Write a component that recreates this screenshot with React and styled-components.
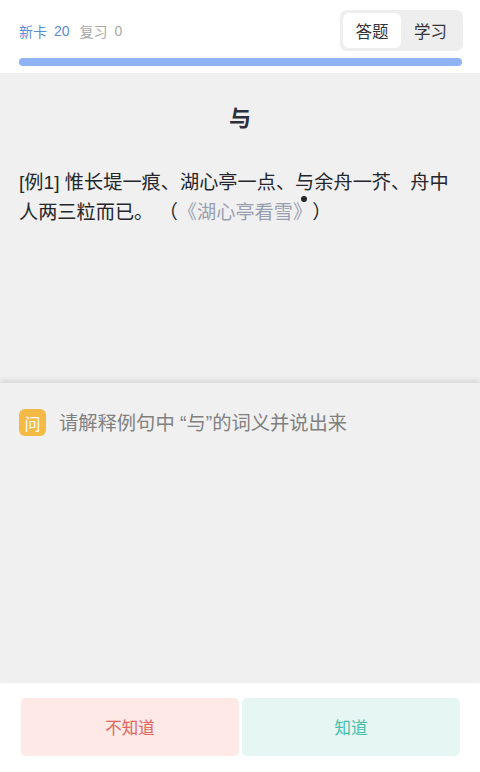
import React from 'react'
import styled, { createGlobalStyle } from 'styled-components'

const GlobalStyle = createGlobalStyle`
    html, body {
        margin: 0;
        padding: 0;
        height: 100%;
    }
    body {
        font-family: "Liberation Sans", "Noto Sans CJK SC", sans-serif;
        background: #fff;
    }
    * {
        box-sizing: border-box;
    }
`

const Page = styled.div`
    width: 480px;
    height: 772px;
    display: flex;
    flex-direction: column;
    overflow: hidden;
`

const Header = styled.header`
    height: 74px;
    padding: 10px 17px 0 19px;
    background: #fff;
    border-bottom: 1px solid #eeeeee;
`

const TopRow = styled.div`
    display: flex;
    align-items: center;
    justify-content: space-between;
    height: 41px;
`

const Counts = styled.div`
    display: flex;
    align-items: center;
    gap: 10px;
    font-size: 14px;
`

const Count = styled.span`
    color: ${props => props.$color};
    display: flex;
    align-items: center;
    gap: 7px;
`

const Segment = styled.div`
    display: flex;
    width: 123px;
    height: 41px;
    padding: 3px;
    background: #eeeeee;
    border-radius: 7px;
`

const SegmentItem = styled.div`
    flex: ${props => (props.$active ? '0 0 58px' : '1')};
    display: flex;
    align-items: center;
    justify-content: center;
    font-size: 16.5px;
    color: #33343a;
    background: ${props => (props.$active ? '#fff' : 'transparent')};
    border-radius: 6px;
`

const Progress = styled.div`
    height: 8px;
    margin: 7px 1px 0 0;
    background: #90b3f5;
    border-radius: 4px;
`

const Question = styled.section`
    flex: 0 0 309px;
    padding: 27px 19px 0;
    background: #f0f0f1;
`

const Word = styled.h1`
    margin: 0;
    font-size: 22px;
    line-height: 36px;
    font-weight: 700;
    text-align: center;
    color: #2b2f3e;
`

const Sentence = styled.p`
    margin: 31px 0 0;
    font-size: 19.2px;
    line-height: 29.5px;
    color: #24262c;
    text-spacing-trim: space-all;
`

const Marked = styled.span`
    position: relative;

    &::after {
        content: '';
        position: absolute;
        left: 6px;
        bottom: -9px;
        width: 6px;
        height: 6px;
        border-radius: 50%;
        background: #24262c;
    }
`

const Source = styled.span`
    color: #9a9fb0;
`

const Prompt = styled.section`
    flex: 1;
    display: flex;
    align-items: flex-start;
    gap: 13px;
    padding: 25px 19px 0;
    background: #f0f0f1;
    box-shadow: 0 -3px 5px rgba(0, 0, 0, 0.1);
    position: relative;
`

const Badge = styled.span`
    flex: none;
    width: 27px;
    height: 27px;
    margin-top: 1px;
    display: flex;
    align-items: center;
    justify-content: center;
    font-size: 16px;
    color: #fff;
    background: #f5b945;
    border-radius: 6px;
`

const PromptText = styled.div`
    font-size: 19.3px;
    line-height: 30px;
    margin-top: 1px;
    color: #808080;
`

const Footer = styled.footer`
    flex: 0 0 89px;
    display: flex;
    gap: 3px;
    padding: 15px 20px 16px 21px;
    background: #fff;
`

const AnswerButton = styled.button`
    flex: 1;
    border: none;
    border-radius: 5px;
    font-family: inherit;
    font-size: 16.5px;
    color: ${props => props.$color};
    background: ${props => props.$bg};
`

function App() {
    return (
        <Page>
            <GlobalStyle />
            <Header>
                <TopRow>
                    <Counts>
                        <Count $color="#5b8bd6"><span>新卡</span><span>20</span></Count>
                        <Count $color="#a8a8a8"><span>复习</span><span>0</span></Count>
                    </Counts>
                    <Segment>
                        <SegmentItem $active>答题</SegmentItem>
                        <SegmentItem>学习</SegmentItem>
                    </Segment>
                </TopRow>
                <Progress />
            </Header>
            <Question>
                <Word>与</Word>
                <Sentence>
                    [例1] 惟长堤一痕、湖心亭一点、<Marked>与</Marked>余舟一芥、舟中人两三粒而已。 （<Source>《湖心亭看雪》</Source>）
                </Sentence>
            </Question>
            <Prompt>
                <Badge>问</Badge>
                <PromptText>请解释例句中 “与”的词义并说出来</PromptText>
            </Prompt>
            <Footer>
                <AnswerButton $bg="#ffe9e7" $color="#e4655c">不知道</AnswerButton>
                <AnswerButton $bg="#e5f6f3" $color="#45bfa8">知道</AnswerButton>
            </Footer>
        </Page>
    )
}

export default App
